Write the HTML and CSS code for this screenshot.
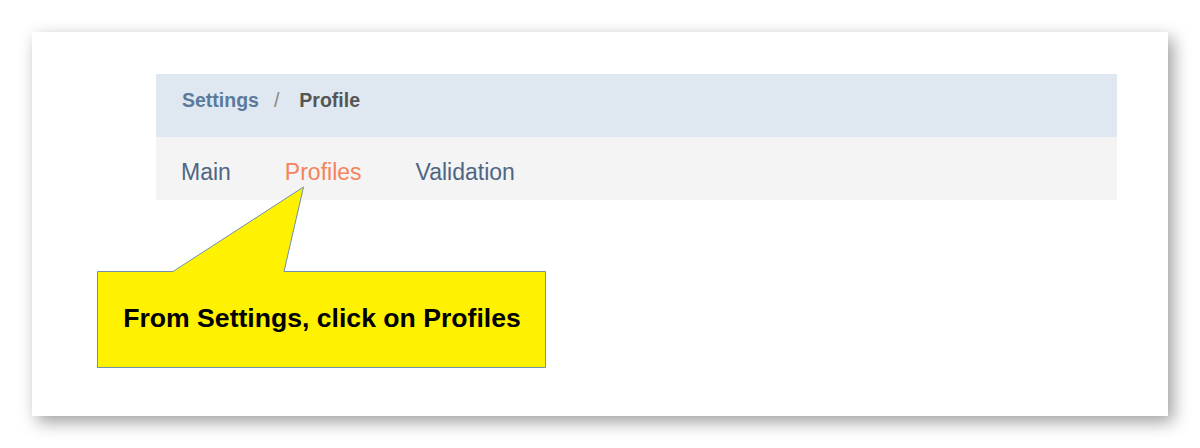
FILE: index.html
```html
<!DOCTYPE html>
<html lang="en">
<head>
<meta charset="utf-8">
<title>Settings / Profile</title>
<link rel="stylesheet" href="styles.css">
</head>
<body>
  <div class="card">
    <div class="panel">
      <div class="breadcrumb">
        <span class="crumb-link">Settings</span>
        <span class="crumb-sep">/</span>
        <span class="crumb-current">Profile</span>
      </div>
      <div class="tabs">
        <span class="tab">Main</span>
        <span class="tab active">Profiles</span>
        <span class="tab">Validation</span>
      </div>
    </div>
    <div class="callout">
      <svg class="callout-shape" width="450" height="215" viewBox="0 0 450 215">
        <path d="M0.5 117.5 H76 L206.5 33 L187 117.5 H448.5 V213.5 H0.5 Z" fill="#fff200" stroke="#6f8fb3" stroke-width="1"/>
      </svg>
      <div class="callout-text">From Settings, click on Profiles</div>
    </div>
  </div>
</body>
</html>
```

FILE: styles.css
```css
html, body {
  margin: 0;
  padding: 0;
  background: #ffffff;
}
body {
  padding: 32px;
  font-family: "Liberation Sans", Arial, sans-serif;
}
.card {
  position: relative;
  width: 1136px;
  height: 384px;
  box-sizing: border-box;
  background: #ffffff;
  box-shadow: 5px 6px 16px rgba(0, 0, 0, 0.38);
  padding: 42px 0 0 124px;
}
.panel {
  width: 961px;
}
.breadcrumb {
  height: 63px;
  background: #dfe8f1;
  display: flex;
  align-items: center;
  padding-left: 26px;
  font-size: 19.5px;
  font-weight: bold;
  padding-bottom: 10px;
  box-sizing: border-box;
}
.crumb-link {
  color: #5b7a9a;
}
.crumb-sep {
  color: #8a8580;
  font-weight: normal;
  margin: 0 20px 0 15px;
}
.crumb-current {
  color: #555555;
}
.tabs {
  height: 63px;
  background: #f4f4f4;
  display: flex;
  align-items: center;
  padding-left: 25px;
  gap: 54px;
  font-size: 23px;
  padding-top: 8px;
  box-sizing: border-box;
}
.tab {
  color: #4e6684;
}
.tab.active {
  color: #f5835d;
}
.callout {
  position: absolute;
  left: 65px;
  top: 122px;
  width: 450px;
  height: 215px;
  display: flex;
  flex-direction: column;
}
.callout-shape {
  position: absolute;
  left: 0;
  top: 0;
}
.callout-text {
  position: relative;
  margin-top: 117px;
  height: 96px;
  display: flex;
  align-items: center;
  justify-content: center;
  font-size: 26.6px;
  font-weight: bold;
  color: #000000;
  padding-bottom: 1px;
  box-sizing: border-box;
}
```
